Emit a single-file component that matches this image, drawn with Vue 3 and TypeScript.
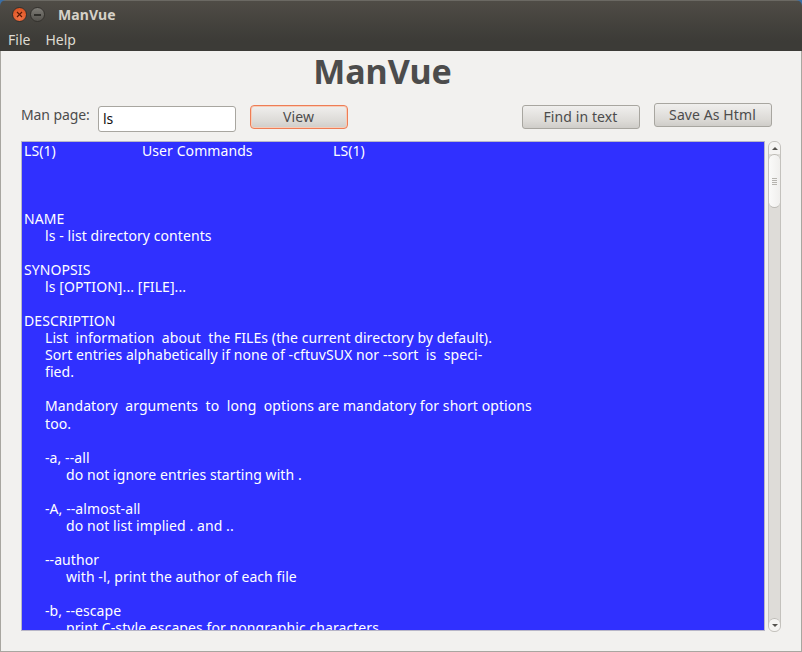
<script setup lang="ts">
interface ManLine { text: string; indent: number }
const lines: ManLine[] = [
  { text: '', indent: 0 },
  { text: '', indent: 0 },
  { text: '', indent: 0 },
  { text: 'NAME', indent: 0 },
  { text: 'ls - list directory contents', indent: 1 },
  { text: '', indent: 0 },
  { text: 'SYNOPSIS', indent: 0 },
  { text: 'ls [OPTION]... [FILE]...', indent: 1 },
  { text: '', indent: 0 },
  { text: 'DESCRIPTION', indent: 0 },
  { text: 'List  information  about  the FILEs (the current directory by default).', indent: 1 },
  { text: 'Sort entries alphabetically if none of -cftuvSUX nor --sort  is  speci-', indent: 1 },
  { text: 'fied.', indent: 1 },
  { text: '', indent: 0 },
  { text: 'Mandatory  arguments  to  long  options are mandatory for short options', indent: 1 },
  { text: 'too.', indent: 1 },
  { text: '', indent: 0 },
  { text: '-a, --all', indent: 1 },
  { text: 'do not ignore entries starting with .', indent: 2 },
  { text: '', indent: 0 },
  { text: '-A, --almost-all', indent: 1 },
  { text: 'do not list implied . and ..', indent: 2 },
  { text: '', indent: 0 },
  { text: '--author', indent: 1 },
  { text: 'with -l, print the author of each file', indent: 2 },
  { text: '', indent: 0 },
  { text: '-b, --escape', indent: 1 },
  { text: 'print C-style escapes for nongraphic characters', indent: 2 },
]
</script>

<template>
  <div class="window">
    <header class="chrome">
      <div class="titlebar">
        <span class="dot close">
          <svg width="7" height="7" viewBox="0 0 7 7"><path d="M1 1l5 5M6 1L1 6" stroke="#5a1a05" stroke-width="1.2" /></svg>
        </span>
        <span class="dot minimize"><i></i></span>
        <span class="title">ManVue</span>
      </div>
      <nav class="menubar">
        <span>File</span>
        <span>Help</span>
      </nav>
    </header>
    <main class="content">
      <h1 class="brand">ManVue</h1>
      <div class="toolbar">
        <label class="label">Man page:</label>
        <div class="input">ls</div>
        <button class="btn view">View</button>
        <div class="spacer"></div>
        <button class="btn find">Find in text</button>
        <button class="btn save">Save As Html</button>
      </div>
      <div class="body">
        <div class="page">
          <div class="head"><span class="h1">LS(1)</span><span class="h2">User Commands</span><span>LS(1)</span></div>
          <div
            v-for="(l, i) in lines"
            :key="i"
            class="line"
            :class="'indent' + l.indent"
          >{{ l.text }}</div>
        </div>
        <div class="scroll">
          <div class="arrow up"></div>
          <div class="thumb"><i></i><i></i><i></i><i></i></div>
          <div class="track"></div>
          <div class="arrow down"></div>
        </div>
      </div>
    </main>
  </div>
</template>

<style>
html, body { margin: 0; background: #3a6ea5; }
</style>

<style scoped>
.window {
  width: 802px;
  height: 652px;
  display: flex;
  flex-direction: column;
  overflow: hidden;
  border-radius: 6px 6px 0 0;
  font-family: "Noto Sans", "Open Sans", sans-serif;
  box-sizing: border-box;
}
.chrome {
  height: 51px;
  flex: none;
  background: linear-gradient(#4f4c46 0, #45433e 20px, #3c3b37 40px);
  border-top: 1px solid #6b6963;
  box-sizing: border-box;
  color: #dfdbd2;
}
.titlebar {
  height: 27px;
  display: flex;
  align-items: center;
  padding-left: 12px;
}
.dot {
  width: 15px;
  height: 15px;
  border-radius: 50%;
  display: flex;
  align-items: center;
  justify-content: center;
  box-sizing: border-box;
  border: 1px solid #33312d;
}
.close { background: radial-gradient(circle at 50% 70%, #f2754a, #d84a16); }
.minimize {
  margin-left: 3px;
  background: linear-gradient(#7d7b75, #55534e);
}
.minimize i { width: 7px; height: 2px; background: #2f2e2a; }
.title {
  margin-left: 13px;
  font-size: 14px;
  font-weight: 700;
  color: #d6d2c8;
  letter-spacing: 0.1px;
}
.menubar {
  height: 23px;
  display: flex;
  align-items: center;
  gap: 15px;
  padding-left: 8px;
  font-size: 14px;
}
.content {
  flex: 1;
  display: flex;
  flex-direction: column;
  background: #f2f1ef;
  border-left: 1px solid #a8a6a0;
  border-right: 1px solid #a8a6a0;
  border-bottom: 1px solid #a8a6a0;
  box-sizing: border-box;
  color: #4c4c4c;
}
.brand {
  margin: 0;
  height: 52px;
  line-height: 40px;
  font-size: 34px;
  font-weight: 700;
  text-align: center;
  color: #4c4c4c;
  padding-right: 37px;
}
.toolbar {
  height: 38px;
  flex: none;
  display: flex;
  align-items: flex-start;
  padding-left: 20px;
}
.label { font-size: 14px; line-height: 20px; margin-top: 2px; width: 77px; flex: none; letter-spacing: -0.1px; }
.input {
  width: 138px;
  height: 26px;
  box-sizing: border-box;
  border: 1px solid #a8a6a0;
  border-radius: 3px;
  background: #fff;
  color: #111;
  font-size: 14px;
  line-height: 23px;
  padding-left: 4px;
  margin-top: 3px;
}
.btn {
  font-family: inherit;
  font-size: 14px;
  color: #4c4c4c;
  height: 24px;
  padding: 0 1px 2px 0;
  border: 1px solid #a8a6a0;
  border-radius: 3px;
  background: linear-gradient(#f0efed, #dcdad6 70%, #cfcdc9);
  box-sizing: border-box;
  letter-spacing: 0.1px;
}
.view {
  width: 98px;
  margin-left: 14px;
  margin-top: 2px;
  border-color: #ee7d55;
  border-radius: 4px;
  box-shadow: inset 0 0 0 1px #f6cdb9;
}
.spacer { flex: 1; }
.find { width: 118px; margin-top: 2px; }
.save { width: 118px; margin-left: 14px; margin-right: 29px; }
.body {
  flex: 1;
  display: flex;
  align-items: flex-start;
  padding-left: 20px;
}
.page {
  width: 744px;
  height: 490px;
  overflow: hidden;
  box-sizing: border-box;
  flex: none;
  background: #3030ff;
  color: #fff;
  border: 1px solid #b8b6c8;
  padding: 0 2px;
  font-size: 14px;
  line-height: 17px;
  letter-spacing: 0.08px;
}
.head { display: flex; height: 17.037px; margin-top: 0; }
.h1 { width: 118px; }
.h2 { width: 191px; }
.line { height: 17.037px; white-space: pre; }
.indent1 { padding-left: 21px; }
.indent2 { padding-left: 42px; }
.scroll {
  width: 13px;
  height: 491px;
  margin-left: 3px;
  display: flex;
  flex-direction: column;
  box-sizing: border-box;
  border: 1px solid #c4c2bd;
  border-radius: 6px;
  background: #dedcd8;
  overflow: hidden;
}
.arrow {
  height: 12px;
  flex: none;
  background: #f5f4f2;
  display: flex;
  align-items: center;
  justify-content: center;
}
.arrow::after {
  content: "";
  border-left: 3px solid transparent;
  border-right: 3px solid transparent;
}
.up::after { border-bottom: 3px solid #55534e; }
.down::after { border-top: 3px solid #55534e; }
.thumb {
  height: 54px;
  flex: none;
  box-sizing: border-box;
  background: linear-gradient(90deg, #fafaf9, #f0efed);
  border: 1px solid #bcbab5;
  border-width: 1px 0;
  border-radius: 6px;
  display: flex;
  flex-direction: column;
  align-items: center;
  justify-content: center;
  gap: 1px;
}
.thumb i { width: 5px; height: 1px; background: #b5b3ae; }
.track { flex: 1; }
.down { border-top: 1px solid #bcbab5; border-radius: 6px 6px 0 0; }
</style>
